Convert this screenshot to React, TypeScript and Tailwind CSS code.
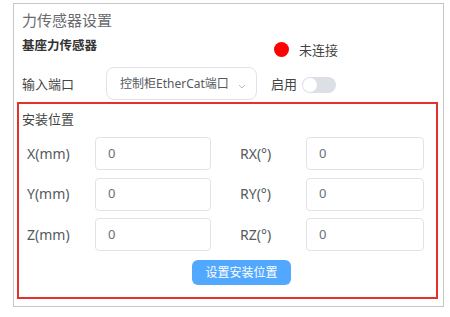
import React from "react";

const font = { fontFamily: '"Noto Sans", "Noto Sans CJK SC", sans-serif' };

function Field({ label, labelW, inputW }: { label: string; labelW: string; inputW: string }) {
  return (
    <div className="flex items-center">
      <div className={`${labelW} text-[14px] leading-[20px] text-[#555a60]`}>{label}</div>
      <div
        className={`${inputW} h-[33px] rounded-[4px] border border-[#e1e3e8] bg-white pl-[12px] flex items-center text-[13px] text-[#6b6f75]`}
      >
        0
      </div>
    </div>
  );
}

export default function App() {
  return (
    <div className="w-[450px] h-[317px] bg-white overflow-hidden" style={font}>
      <div className="ml-[13px] mt-[3px] w-[431px] h-[304px] border border-[#c6c6c6] bg-white flex flex-col">
        <div className="pl-[8px] pt-[5.5px] text-[15px] leading-[20px] text-[#686b70]">力传感器设置</div>
        <div className="flex items-start mt-[8.5px] h-[20px]">
          <div className="w-[260px] pl-[8px] text-[12.5px] leading-[16px] font-bold text-[#333]">基座力传感器</div>
          <div className="mt-[4px] w-[15px] h-[15px] rounded-full bg-[#ff0000]"></div>
          <div className="ml-[10px] mt-[4px] text-[13px] leading-[16px] text-[#444]">未连接</div>
        </div>
        <div className="flex items-center mt-[9px] pl-[8px]">
          <div className="w-[84px] text-[13px] leading-[18px] text-[#444]">输入端口</div>
          <div className="w-[151px] h-[33px] rounded-[8px] border border-[#e1e3e8] flex items-center pl-[13px] pr-[9px]">
            <span className="flex-1 text-[12px] text-[#555a60] leading-[16px]">控制柜EtherCat端口</span>
            <svg width="10" height="10" viewBox="0 0 10 10" className="mt-[4px]">
              <path d="M2 4 L5 7 L8 4" fill="none" stroke="#b8bcc4" strokeWidth="1" />
            </svg>
          </div>
          <div className="ml-[14px] text-[13px] leading-[18px] text-[#444]">启用</div>
          <div className="ml-[5px] mt-[2px] w-[34px] h-[16px] rounded-full bg-[#dcdfe6] flex items-center pl-[1px]">
            <div className="w-[14px] h-[14px] rounded-full bg-white"></div>
          </div>
        </div>
        <div className="ml-[3px] mt-[2px] w-[421px] h-[197px] border-2 border-[#e4322b] flex flex-col">
          <div className="pl-[3px] pt-[6px] text-[13px] leading-[18px] text-[#444]">安装位置</div>
          <div className="mt-[9px] pl-[8px] flex flex-col gap-[7.5px]">
            <div className="flex items-center gap-[29px]">
              <Field label="X(mm)" labelW="w-[68px]" inputW="w-[116px]" />
              <Field label="RX(°)" labelW="w-[66px]" inputW="w-[118px]" />
            </div>
            <div className="flex items-center gap-[29px]">
              <Field label="Y(mm)" labelW="w-[68px]" inputW="w-[116px]" />
              <Field label="RY(°)" labelW="w-[66px]" inputW="w-[118px]" />
            </div>
            <div className="flex items-center gap-[29px]">
              <Field label="Z(mm)" labelW="w-[68px]" inputW="w-[116px]" />
              <Field label="RZ(°)" labelW="w-[66px]" inputW="w-[118px]" />
            </div>
          </div>
          <div className="mt-[9px] ml-[173px] w-[99px] h-[25px] rounded-[6px] bg-[#52a8ff] flex items-center justify-center text-[12px] text-white">
            设置安装位置
          </div>
        </div>
      </div>
    </div>
  );
}
